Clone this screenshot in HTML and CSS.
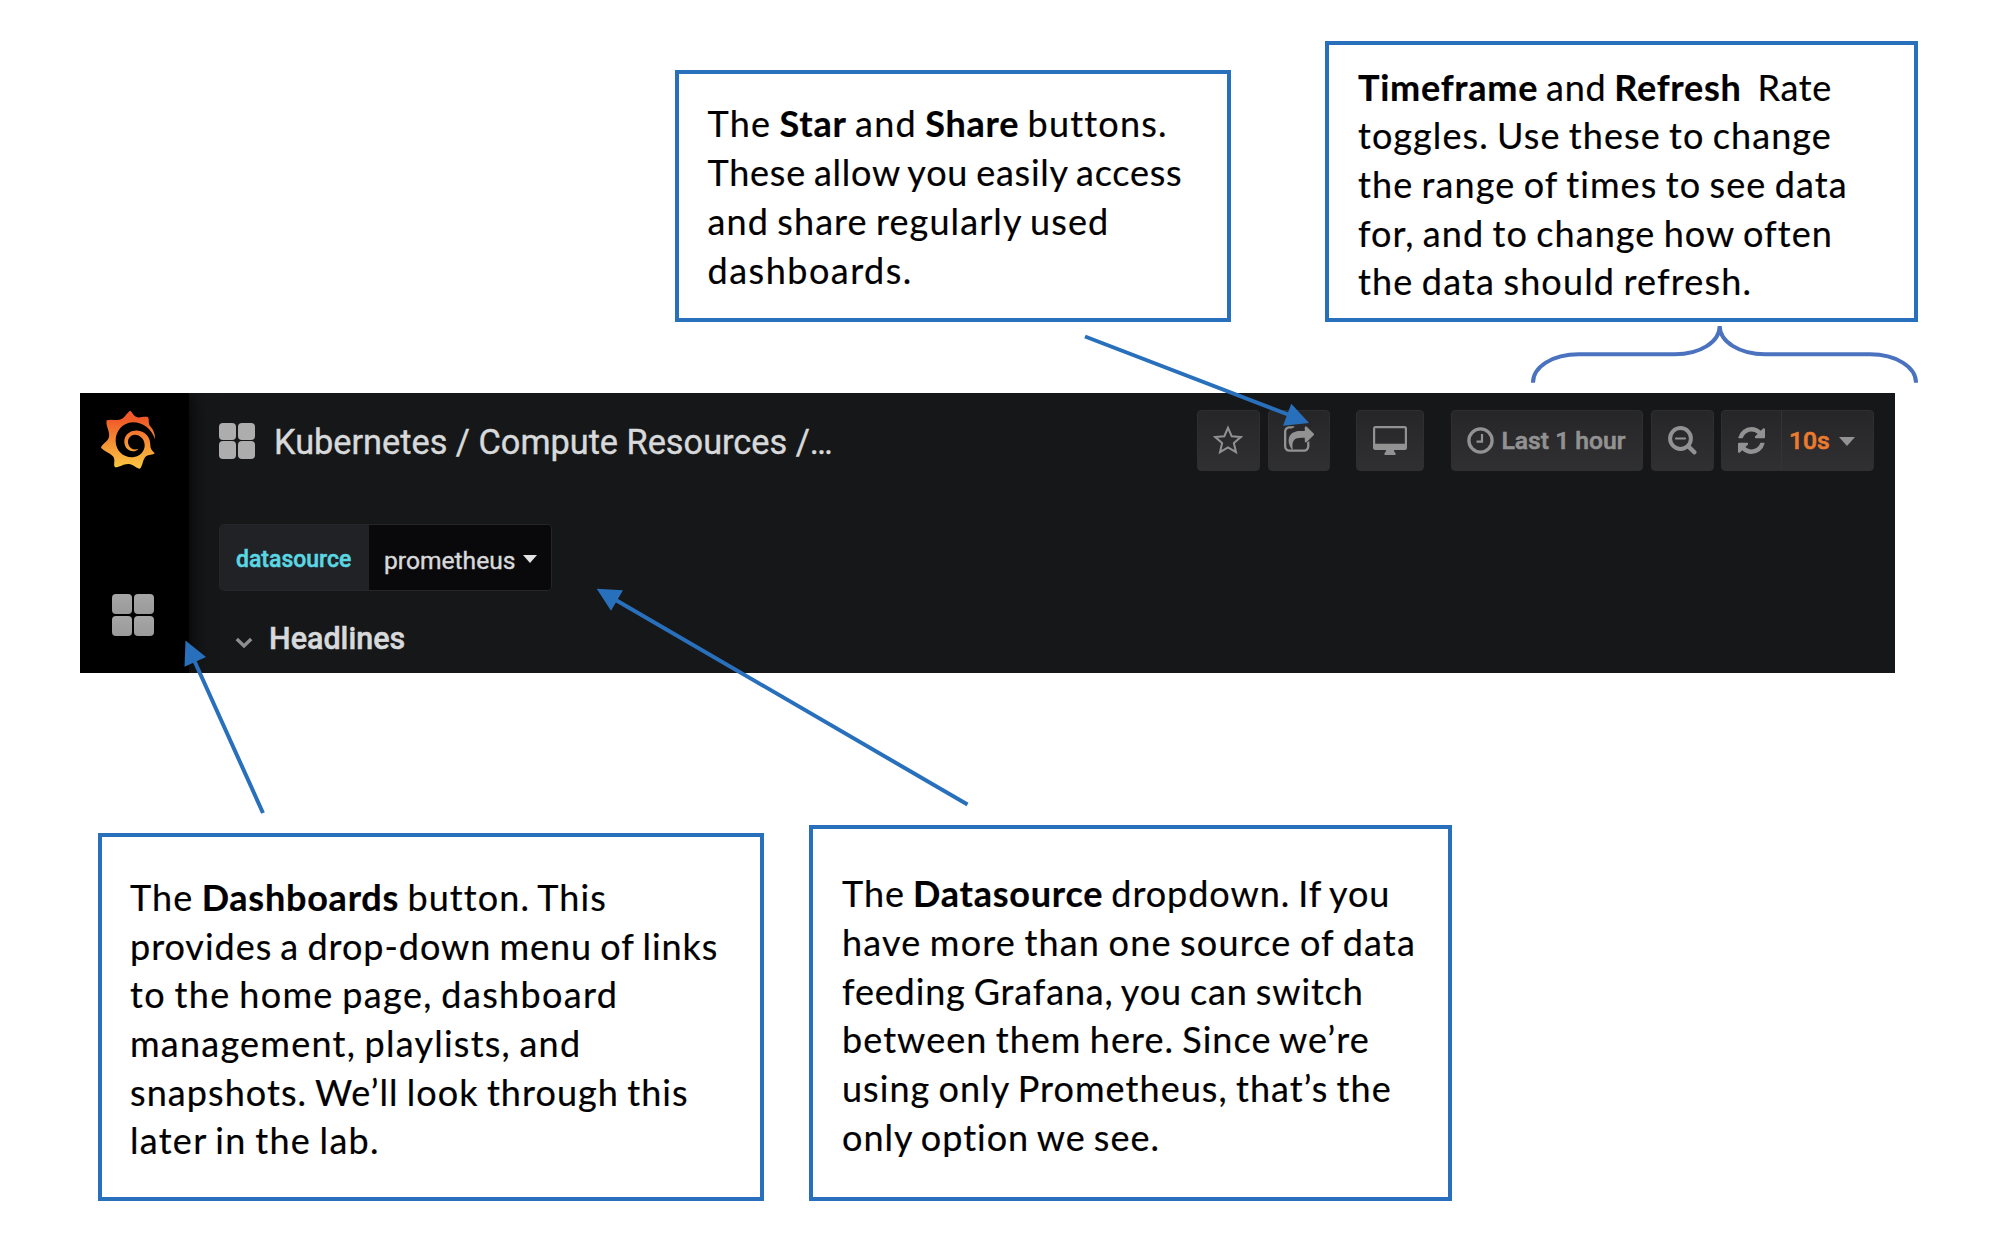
FILE: index.html
```html
<!DOCTYPE html>
<html lang="en">
<head>
<meta charset="utf-8">
<title>Grafana dashboard controls</title>
<link rel="stylesheet" href="styles.css">
</head>
<body>
<main class="slide">
  <section class="callouts callouts-top">
    <div class="callout callout-star">
      <div class="line">The <b>Star</b> and <b>Share</b> buttons.</div>
      <div class="line">These allow you easily access</div>
      <div class="line">and share regularly used</div>
      <div class="line">dashboards.</div>
    </div>
    <div class="callout callout-time">
      <div class="line"><b>Timeframe</b> and <b>Refresh</b>&nbsp; Rate</div>
      <div class="line">toggles. Use these to change</div>
      <div class="line">the range of times to see data</div>
      <div class="line">for, and to change how often</div>
      <div class="line">the data should refresh.</div>
    </div>
  </section>

  <section class="grafana">
    <nav class="sidebar">
      <svg class="logo" viewBox="120 90 168 180">
        <defs>
          <linearGradient id="flame" x1="0" y1="0" x2="0" y2="1">
            <stop offset=".15" stop-color="#f05a28"/>
            <stop offset="1" stop-color="#fbca42"/>
          </linearGradient>
        </defs>
        <path fill="url(#flame)" d="M211 92C217 97 220 107 229 111C240 115 250 108 264 111C268 117 265 128 268 135C278 146 286 160 285 178C276 148 250 127 218 127C188 128 166 154 167 184C168 213 190 233 218 232C240 230 255 213 254 195C253 176 240 165 225 164C208 165 200 181 206 195C211 208 224 211 235 206C228 216 212 216 203 208C189 196 189 170 206 159C228 144 261 153 269 181C272 193 270 201 274 208C277 213 281 216 284 220C280 226 265 223 258 229C248 238 249 256 240 266C230 266 222 256 211 253C194 248 179 263 165 262C159 254 167 240 160 230C151 219 133 214 123 203C125 193 141 186 146 174C153 158 135 137 140 121C153 116 171 123 183 118C196 112 200 98 211 92Z"/>
      </svg>
      <div class="tiles tiles-nav"><i></i><i></i><i></i><i></i></div>
    </nav>
    <div class="board">
      <header class="toolbar">
        <div class="tiles tiles-title"><i></i><i></i><i></i><i></i></div>
        <h1 class="title">Kubernetes / Compute Resources /…</h1>
        <div class="buttons">
          <button class="btn btn-star"><svg width="30" height="30" viewBox="0 0 30 30"><path d="M15 2.8L18.7 11.2L27.7 12.1L20.9 18.1L23 27.2L15 22.5L7 27.2L9.1 18.1L2.3 12.1L11.3 11.2Z" fill="none" stroke="#929292" stroke-width="2"/></svg></button>
          <button class="btn btn-share"><svg width="30" height="26" viewBox="0 128 1664 1408"><path d="M1408 990v258q0 119-84.500 203.500T1120 1536H288q-119 0-203.500-84.500T0 1248V416q0-119 84.500-203.500T288 128h255q13 0 22.500 9.500T575 160q0 27-26 32-77 26-133 60-10 4-16 4H288q-66 0-113 47t-47 113v832q0 66 47 113t113 47h832q66 0 113-47t47-113V1034q0-19 18-28 28-13 54-37 16-16 35-8 21 9 21 29zM1645 621l-384 384q-18 19-45 19-12 0-25-5-39-17-39-59V768h-160q-323 0-438 131-119 137-74 473 3 23-20 34-8 2-12 2-16 0-26-13-10-14-21-31t-39.500-68.500T313 1195.500 274.500 1081 256 960q0-49 3.500-91t14-90 28-88 47-81.500 68.500-74 94.500-61.500 124.500-48.500 159.500-30.500T992 384h160V192q0-42 39-59 13-5 25-5 26 0 45 19l384 384q19 19 19 45t-19 45z"/></svg></button>
          <button class="btn btn-screen"><svg width="34" height="29" viewBox="0 0 34 29"><path fill-rule="evenodd" d="M2.500 0H31.500Q34 0 34 2.500V21.500Q34 24 31.500 24H21Q21 26.500 22.500 27V29H11.500V27Q13 26.500 13 24H2.500Q0 24 0 21.500V2.500Q0 0 2.500 0ZM2.200 2.200V17.700H31.800V2.200Z"/></svg></button>
          <button class="btn btn-range"><svg width="27" height="27" viewBox="0 0 27 27"><g fill="none" stroke="#929292"><circle cx="13.500" cy="13.500" r="11.600" stroke-width="3.300"/><path d="M15 7V14.700H9.500" stroke-width="2.200"/></g></svg><span>Last 1 hour</span></button>
          <button class="btn btn-zoom"><svg width="29" height="29" viewBox="0 0 29 29"><g fill="none" stroke="#929292" stroke-linecap="round"><circle cx="12.500" cy="12.500" r="10.400" stroke-width="4"/><path d="M20.500 20.500L26.300 26.300" stroke-width="4.400"/><path d="M8 12.500H17" stroke-width="2.200"/></g></svg></button>
          <div class="btn btn-refresh">
            <span class="reload"><svg width="27" height="27" viewBox="0 0 1536 1536"><path d="M1511 928q0 5-1 7-64 268-268 434.500T764 1536q-146 0-282.500-55T238 1324l-129 129q-19 19-45 19t-45-19-19-45V960q0-26 19-45t45-19h448q26 0 45 19t19 45-19 45l-137 137q71 66 161 102t187 36q134 0 250-65t186-179q11-17 53-117 8-23 30-23h192q13 0 22.500 9.500t9.500 22.500zm25-800v448q0 26-19 45t-45 19h-448q-26 0-45-19t-19-45 19-45l138-138Q969 256 768 256q-134 0-250 65T332 500q-11 17-53 117-8 23-30 23H50q-13 0-22.500-9.500T18 608v-7q65-268 270-434.500T768 0q146 0 284 55.500T1297 212l130-129q19-19 45-19t45 19 19 45z"/></svg></span>
            <span class="interval">10s<i class="caret"></i></span>
          </div>
        </div>
      </header>
      <div class="variable">
        <label class="var-label">datasource</label>
        <div class="var-value">prometheus<i class="caret"></i></div>
      </div>
      <div class="row-title">
        <svg width="18" height="12" viewBox="0 0 18 12"><path d="M1.800 2L9 9L16.200 2" fill="none" stroke="#8e8e8e" stroke-width="3.400"/></svg>
        <h2>Headlines</h2>
      </div>
    </div>
  </section>

  <section class="callouts callouts-bottom">
    <div class="callout callout-dash">
      <div class="line">The <b>Dashboards</b> button. This</div>
      <div class="line">provides a drop-down menu of links</div>
      <div class="line">to the home page, dashboard</div>
      <div class="line">management, playlists, and</div>
      <div class="line">snapshots. We’ll look through this</div>
      <div class="line">later in the lab.</div>
    </div>
    <div class="callout callout-source">
      <div class="line">The <b>Datasource</b> dropdown. If you</div>
      <div class="line">have more than one source of data</div>
      <div class="line">feeding Grafana, you can switch</div>
      <div class="line">between them here. Since we’re</div>
      <div class="line">using only Prometheus, that’s the</div>
      <div class="line">only option we see.</div>
    </div>
  </section>

  <svg class="pointers" viewBox="0 0 1990 1260">
    <g class="arrow">
      <path d="M1085 336.500L1292 416M967.500 804.500L614 599M263 813L194 660"/>
      <path class="head" d="M1309 423L1291.300 403.700L1283 425.700ZM596.700 588.700L623 590.300L611 610.700ZM185.500 640.500L206 657L184.500 666.700Z"/>
    </g>
    <path class="brace" d="M1533 382.700C1533 367 1552 354.300 1579 354.300H1675C1700 354.300 1719.700 342 1719.700 326C1719.700 342 1740 354.300 1765 354.300H1870C1896 354.300 1916 367 1916 382.700"/>
  </svg>
</main>
</body>
</html>
```
FILE: styles.css
```css
* { box-sizing: border-box; }
body { margin: 0; background: #fff; }
h1, h2 { margin: 0; }

.slide { position: relative; width: 1990px; height: 1260px; overflow: hidden; }

/* Callout boxes */
.callouts { display: flex; }
.callouts-top { align-items: flex-end; gap: 94px; height: 322px; padding-left: 675px; }
.callouts-bottom { align-items: flex-end; gap: 45px; height: 376px; margin-top: 152px; padding-left: 98px; }
.callout {
  flex: none;
  border: 4px solid #2970bc;
  background: #fff;
  color: #000;
  font-family: Lato, "Open Sans", sans-serif;
  font-size: 36px;
  font-variant-ligatures: none;
  word-spacing: -2px;
  -webkit-text-stroke: .2px #000;
}
.callout b { letter-spacing: .75px; }
.line { height: 48.7px; line-height: 48.7px; white-space: nowrap; }

.callout-star { width: 556px; height: 252px; padding: 24.500px 0 0 28.500px; }
.callout-star .line { height: 49.1px; line-height: 49.1px; }
.callout-star .line:nth-child(1) { letter-spacing: 1.2px; }
.callout-star .line:nth-child(2) { letter-spacing: .76px; }
.callout-star .line:nth-child(3) { letter-spacing: 1.1px; }
.callout-star .line:nth-child(4) { letter-spacing: 1.5px; }

.callout-time { width: 593px; height: 281px; padding: 17.700px 0 0 29px; }
.callout-time .line:nth-child(1) { letter-spacing: .7px; }
.callout-time .line:nth-child(2) { letter-spacing: 1.08px; }
.callout-time .line:nth-child(3) { letter-spacing: 1.1px; }
.callout-time .line:nth-child(4) { letter-spacing: 1.08px; }
.callout-time .line:nth-child(5) { letter-spacing: 1.15px; }

.callout-dash { width: 666px; height: 368px; padding: 35.900px 0 0 28px; }
.callout-dash .line:nth-child(1) { letter-spacing: 1.1px; }
.callout-dash .line:nth-child(2) { letter-spacing: .97px; }
.callout-dash .line:nth-child(3) { letter-spacing: 1.36px; }
.callout-dash .line:nth-child(4) { letter-spacing: 1.24px; }
.callout-dash .line:nth-child(5) { letter-spacing: 1.06px; }
.callout-dash .line:nth-child(6) { letter-spacing: 1.3px; }

.callout-source { width: 643px; height: 376px; padding: 40.200px 0 0 29px; }
.callout-source .line:nth-child(1) { letter-spacing: .95px; }
.callout-source .line:nth-child(2) { letter-spacing: 1.19px; }
.callout-source .line:nth-child(3) { letter-spacing: .86px; }
.callout-source .line:nth-child(4) { letter-spacing: 1.05px; }
.callout-source .line:nth-child(5) { letter-spacing: 1.05px; }
.callout-source .line:nth-child(6) { letter-spacing: .99px; }

/* Grafana panel */
.grafana {
  display: flex;
  width: 1815px;
  height: 280px;
  margin: 71px 0 0 80px;
  background: #161719;
  font-family: Roboto, sans-serif;
}
.sidebar {
  display: flex;
  flex-direction: column;
  align-items: center;
  width: 109px;
  padding-top: 17px;
  background: #000;
  box-shadow: 0 0 20px #000;
  clip-path: inset(0 -40px 0 0);
}
.logo { width: 56px; height: 60px; margin-right: 13px; }
.tiles { display: grid; grid-template-columns: 1fr 1fr; flex: none; }
.tiles i { border-radius: 4px; background: linear-gradient(#a6a6a6, #9a9a9a); }
.tiles-nav { width: 42px; height: 42px; gap: 2px; margin: 124px 0 0 -3px; }
.tiles-title { width: 36px; height: 36px; gap: 1.500px; }
.tiles-title i { background: #adadad; }

.board { flex: 1; padding: 17px 21px 0 30px; }
.toolbar { display: flex; align-items: center; height: 61px; }
.title {
  margin-left: 19px;
  padding-top: 2px;
  font-size: 34.300px;
  font-weight: 400;
  line-height: 40px;
  color: #d8d9da;
  white-space: nowrap;
  -webkit-text-stroke: .4px #d8d9da;
}
.buttons { display: flex; margin-left: auto; }
.btn {
  display: flex;
  align-items: center;
  justify-content: center;
  height: 61px;
  padding: 0;
  border: 1px solid #2f2f32;
  border-radius: 4px;
  background: linear-gradient(#262628, #303032);
  color: #929292;
  font: 500 24.700px Roboto, sans-serif;
  -webkit-text-stroke: .6px currentColor;
}
.btn svg { fill: #929292; flex: none; }
.btn-star { width: 63px; margin-right: 8px; }
.btn-star svg { margin: -1px 1px 0 0; }
.btn-share { width: 62px; margin-right: 26px; }
.btn-share svg { margin: -4px 1px 0 0; }
.btn-screen { width: 68px; margin-right: 27px; }
.btn-range { width: 192px; margin-right: 8px; gap: 7px; padding-right: 1px; }
.btn-zoom { width: 63px; margin-right: 7px; }
.btn-refresh { width: 153px; }
.reload { display: flex; align-items: center; justify-content: center; width: 60px; height: 59px; border-right: 1px solid #343437; }
.reload svg { margin-right: 1px; }
.interval { display: flex; flex: 1; align-items: center; padding-left: 7px; color: #eb7b2f; }
.caret { border: 8px solid transparent; border-bottom: 0; border-top: 9px solid #929292; margin: 2px 0 0 9px; }

.variable {
  display: flex;
  width: 333px;
  height: 67px;
  margin-top: 53px;
  border: 1.500px solid #262628;
  border-radius: 5px;
  overflow: hidden;
}
.var-label {
  width: 149px;
  padding: 3px 0 0 16px;
  background: #212226;
  color: #5ad7e2;
  font: 500 23px/64px Roboto, sans-serif;
  -webkit-text-stroke: .5px #5ad7e2;
}
.var-value {
  display: flex;
  flex: 1;
  align-items: center;
  padding: 5px 0 0 15px;
  background: #09090b;
  color: #d8d9da;
  font-size: 24.600px;
  -webkit-text-stroke: .4px #d8d9da;
}
.var-value .caret { border-width: 8px 7px 0; border-top-color: #e3e3e3; margin: -3px 0 0 8px; }
.row-title { display: flex; align-items: center; margin-top: 30px; padding-left: 16px; }
.row-title svg { margin-top: 7px; }
.row-title h2 {
  margin-left: 16px;
  font-size: 30.500px;
  line-height: 36px;
  font-weight: 500;
  color: #d8d9da;
  -webkit-text-stroke: .5px #d8d9da;
}

/* Arrows and brace drawn over the slide */
.pointers { position: absolute; inset: 0; width: 1990px; height: 1260px; }
.arrow path { fill: none; stroke: #2970bc; stroke-width: 4; }
.arrow .head { fill: #2970bc; stroke: none; }
.brace { fill: none; stroke: #4a72bf; stroke-width: 4; }
```
